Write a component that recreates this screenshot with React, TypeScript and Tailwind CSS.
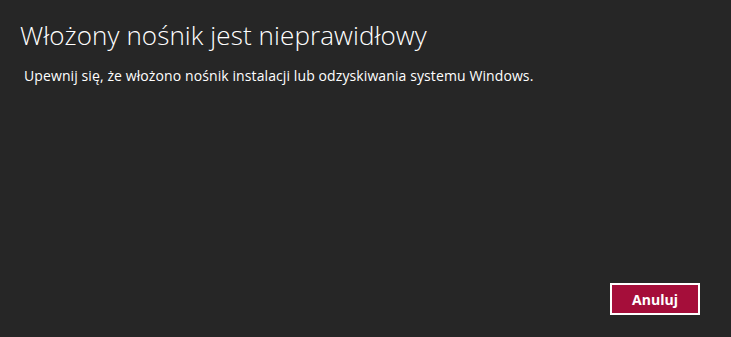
export default function App() {
  return (
    <div className="w-[731px] h-[337px] bg-[#262626] text-white flex flex-col" style={{ fontFamily: '"Open Sans", "Noto Sans", sans-serif' }}>
      <h1 className="ml-[20px] mt-[17px] text-[26px] font-light leading-[36px] tracking-[0.1px]">
        Włożony nośnik jest nieprawidłowy
      </h1>
      <p className="ml-[24px] mt-[13px] text-[14px] leading-[20px] tracking-[0.1px]">
        Upewnij się, że włożono nośnik instalacji lub odzyskiwania systemu Windows.
      </p>
      <div className="mt-auto mb-[22px] mr-[31px] flex justify-end">
        <button className="w-[90px] h-[32px] border-2 border-white bg-[#a50e3a] text-[14px] font-bold">
          Anuluj
        </button>
      </div>
    </div>
  );
}
